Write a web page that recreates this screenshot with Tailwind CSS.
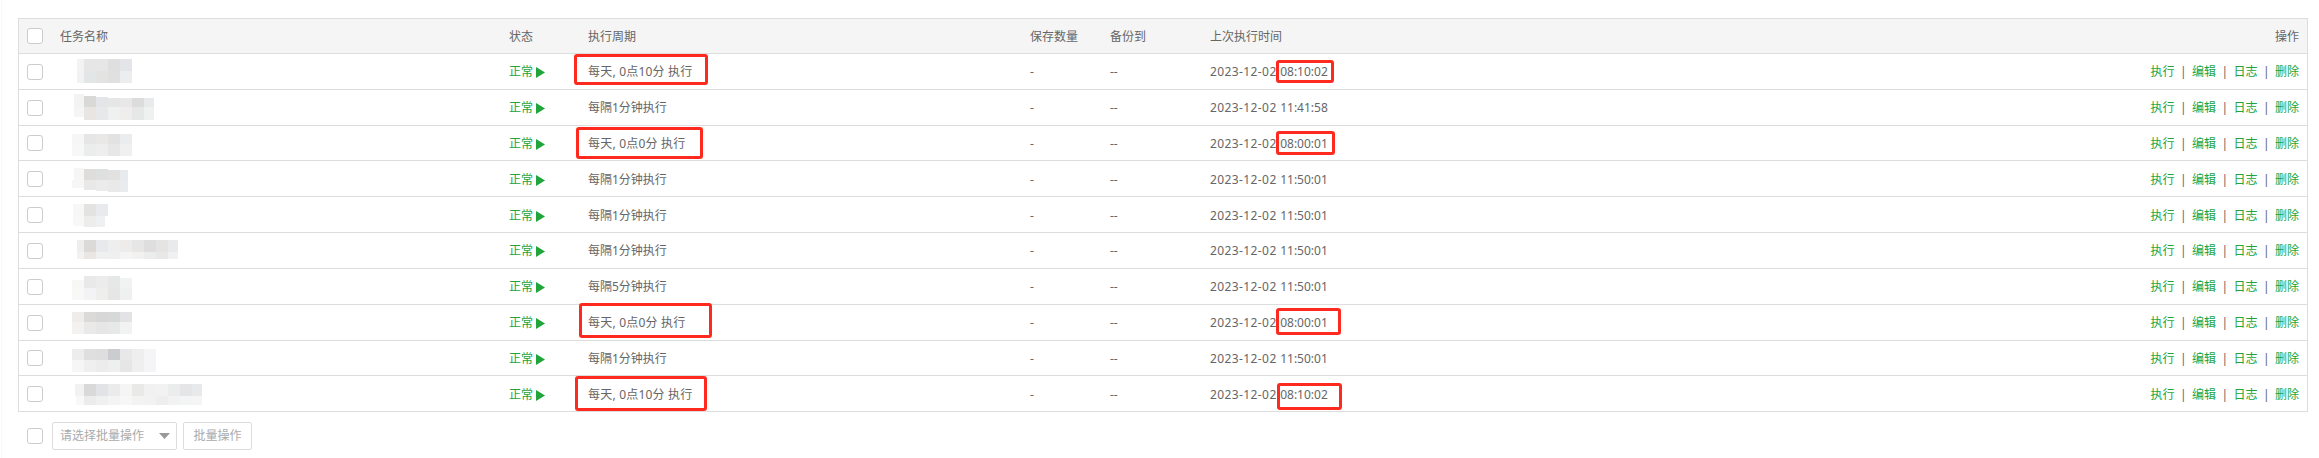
<!DOCTYPE html>
<html lang="zh-CN">
<head>
  <meta charset="UTF-8" />
  <title>计划任务</title>
  <script src="https://cdn.jsdelivr.net/npm/@tailwindcss/browser@4"></script>
</head>
<body class="bg-white">
<div class="relative w-[2319px] h-[458px] overflow-hidden pt-[18px] text-[12px] leading-[16px] text-[#666] font-['Noto_Sans','Noto_Sans_CJK_SC',sans-serif]">
  <div class="absolute left-[1px] top-0 w-px h-full bg-[#f9f9f9]"></div>

  <!-- Task table -->
  <div class="ml-[18px] w-[2290px] border-t border-x border-[#ddd]">
    <div class="grid grid-cols-[41px_449px_79px_442px_80px_100px_1fr_200px] items-center h-[35px] bg-[#f5f5f5] border-b border-[#ddd]">
      <div class="pl-2 flex"><input type="checkbox" class="appearance-none w-4 h-4 bg-white border border-[#ccc] rounded-[3px]" /></div>
      <div class="pt-[2px]">任务名称</div>
      <div class="pt-[2px]">状态</div>
      <div class="pt-[2px]">执行周期</div>
      <div class="pt-[2px]">保存数量</div>
      <div class="pt-[2px]">备份到</div>
      <div class="pt-[2px]">上次执行时间</div>
      <div class="pt-[2px] pr-2 text-right">操作</div>
    </div>

    <!-- row 1 -->
    <div class="grid grid-cols-[41px_449px_79px_442px_80px_100px_1fr_200px] items-center h-9 border-b border-[#ddd]">
      <div class="pl-2 flex"><input type="checkbox" class="appearance-none w-4 h-4 bg-white border border-[#ccc] rounded-[3px]" /></div>
      <div><svg class="block w-[160px] h-[35px]" viewBox="60 54 160 35"><rect x="77" y="59" width="7" height="12" fill="#f3f3f3"/><rect x="84" y="59" width="12" height="12" fill="#e6e6e6"/><rect x="96" y="59" width="12" height="12" fill="#e6e6e6"/><rect x="108" y="59" width="12" height="12" fill="#dfdfdf"/><rect x="120" y="59" width="12" height="12" fill="#e4e5e8"/><rect x="77" y="71" width="7" height="12" fill="#f2f2f2"/><rect x="84" y="71" width="12" height="12" fill="#e3e6e6"/><rect x="96" y="71" width="12" height="12" fill="#e3e3e1"/><rect x="108" y="71" width="12" height="12" fill="#e0e0e0"/><rect x="120" y="71" width="12" height="12" fill="#ecedef"/></svg></div>
      <div class="pt-[1px] flex items-center text-[#20a53a]">正常<svg class="ml-[3px] w-[9px] h-[11px]" viewBox="0 0 9 11"><polygon points="0,0 9,5.5 0,11" fill="#20a53a"/></svg></div>
      <div class="pt-[1px] tracking-[0.2px]">每天, 0点10分 执行</div>
      <div class="pt-[1px]">-</div>
      <div class="pt-[1px]">--</div>
      <div class="pt-[1px]"><span class="tracking-[0.4px]">2023-12-02 </span>08:10:02</div>
      <div class="pt-[1px] pr-2 flex justify-end text-[#20a53a]"><span>执行</span><span class="w-[17.5px] text-center text-[#666]">|</span><span>编辑</span><span class="w-[17.5px] text-center text-[#666]">|</span><span>日志</span><span class="w-[17.5px] text-center text-[#666]">|</span><span>删除</span></div>
    </div>

    <!-- row 2 -->
    <div class="grid grid-cols-[41px_449px_79px_442px_80px_100px_1fr_200px] items-center h-9 border-b border-[#ddd]">
      <div class="pl-2 flex"><input type="checkbox" class="appearance-none w-4 h-4 bg-white border border-[#ccc] rounded-[3px]" /></div>
      <div><svg class="block w-[160px] h-[35px]" viewBox="60 90 160 35"><rect x="74" y="94" width="10" height="13" fill="#f3f3f3"/><rect x="84" y="96" width="12" height="11" fill="#d9d9d7"/><rect x="96" y="97" width="12" height="10" fill="#e4e5e8"/><rect x="108" y="98" width="12" height="9" fill="#e6e6e7"/><rect x="120" y="98" width="12" height="9" fill="#e8e8e8"/><rect x="132" y="98" width="12" height="9" fill="#dcdcdc"/><rect x="144" y="98" width="10" height="9" fill="#e9eaec"/><rect x="74" y="107" width="10" height="10" fill="#f5f5f5"/><rect x="84" y="107" width="12" height="13" fill="#e8e5e3"/><rect x="96" y="107" width="12" height="13" fill="#e7e8ea"/><rect x="108" y="107" width="12" height="13" fill="#eff1f0"/><rect x="120" y="107" width="12" height="13" fill="#f0eeed"/><rect x="132" y="107" width="12" height="13" fill="#e6e8e7"/><rect x="144" y="107" width="10" height="13" fill="#eff0f0"/></svg></div>
      <div class="pt-[1px] flex items-center text-[#20a53a]">正常<svg class="ml-[3px] w-[9px] h-[11px]" viewBox="0 0 9 11"><polygon points="0,0 9,5.5 0,11" fill="#20a53a"/></svg></div>
      <div class="pt-[1px]">每隔1分钟执行</div>
      <div class="pt-[1px]">-</div>
      <div class="pt-[1px]">--</div>
      <div class="pt-[1px]"><span class="tracking-[0.4px]">2023-12-02 </span>11:41:58</div>
      <div class="pt-[1px] pr-2 flex justify-end text-[#20a53a]"><span>执行</span><span class="w-[17.5px] text-center text-[#666]">|</span><span>编辑</span><span class="w-[17.5px] text-center text-[#666]">|</span><span>日志</span><span class="w-[17.5px] text-center text-[#666]">|</span><span>删除</span></div>
    </div>

    <!-- row 3 -->
    <div class="grid grid-cols-[41px_449px_79px_442px_80px_100px_1fr_200px] items-center h-[35px] border-b border-[#ddd]">
      <div class="pl-2 flex"><input type="checkbox" class="appearance-none w-4 h-4 bg-white border border-[#ccc] rounded-[3px]" /></div>
      <div><svg class="block w-[160px] h-[34px]" viewBox="60 126 160 34"><rect x="72" y="134" width="12" height="10" fill="#f6f6f6"/><rect x="84" y="134" width="12" height="10" fill="#e6e6e6"/><rect x="96" y="134" width="12" height="10" fill="#e9e8e6"/><rect x="108" y="134" width="12" height="10" fill="#e2e2e3"/><rect x="120" y="134" width="12" height="10" fill="#ebecee"/><rect x="72" y="144" width="12" height="12" fill="#f7f7f7"/><rect x="84" y="144" width="12" height="12" fill="#ebeded"/><rect x="96" y="144" width="12" height="12" fill="#eeeeee"/><rect x="108" y="144" width="12" height="12" fill="#e7e7e8"/><rect x="120" y="144" width="12" height="12" fill="#f0f0f0"/></svg></div>
      <div class="pt-[2px] flex items-center text-[#20a53a]">正常<svg class="ml-[3px] w-[9px] h-[11px]" viewBox="0 0 9 11"><polygon points="0,0 9,5.5 0,11" fill="#20a53a"/></svg></div>
      <div class="pt-[2px] tracking-[0.2px]">每天, 0点0分 执行</div>
      <div class="pt-[2px]">-</div>
      <div class="pt-[2px]">--</div>
      <div class="pt-[2px]"><span class="tracking-[0.4px]">2023-12-02 </span>08:00:01</div>
      <div class="pt-[2px] pr-2 flex justify-end text-[#20a53a]"><span>执行</span><span class="w-[17.5px] text-center text-[#666]">|</span><span>编辑</span><span class="w-[17.5px] text-center text-[#666]">|</span><span>日志</span><span class="w-[17.5px] text-center text-[#666]">|</span><span>删除</span></div>
    </div>

    <!-- row 4 -->
    <div class="grid grid-cols-[41px_449px_79px_442px_80px_100px_1fr_200px] items-center h-9 border-b border-[#ddd]">
      <div class="pl-2 flex"><input type="checkbox" class="appearance-none w-4 h-4 bg-white border border-[#ccc] rounded-[3px]" /></div>
      <div><svg class="block w-[160px] h-[35px]" viewBox="60 161 160 35"><rect x="74" y="168" width="10" height="12" fill="#f6f6f6"/><rect x="84" y="169" width="12" height="11" fill="#dedddb"/><rect x="96" y="169" width="12" height="11" fill="#dde0de"/><rect x="108" y="170" width="12" height="10" fill="#e3e1df"/><rect x="120" y="170" width="8" height="10" fill="#e8ebee"/><rect x="72" y="180" width="12" height="8" fill="#f6f6f6"/><rect x="84" y="180" width="12" height="10" fill="#e8e8e8"/><rect x="96" y="180" width="12" height="11" fill="#ebebeb"/><rect x="108" y="180" width="12" height="12" fill="#e9e9e9"/><rect x="120" y="180" width="8" height="12" fill="#e9ebee"/></svg></div>
      <div class="pt-[3px] flex items-center text-[#20a53a]">正常<svg class="ml-[3px] w-[9px] h-[11px]" viewBox="0 0 9 11"><polygon points="0,0 9,5.5 0,11" fill="#20a53a"/></svg></div>
      <div class="pt-[3px]">每隔1分钟执行</div>
      <div class="pt-[3px]">-</div>
      <div class="pt-[3px]">--</div>
      <div class="pt-[3px]"><span class="tracking-[0.4px]">2023-12-02 </span>11:50:01</div>
      <div class="pt-[3px] pr-2 flex justify-end text-[#20a53a]"><span>执行</span><span class="w-[17.5px] text-center text-[#666]">|</span><span>编辑</span><span class="w-[17.5px] text-center text-[#666]">|</span><span>日志</span><span class="w-[17.5px] text-center text-[#666]">|</span><span>删除</span></div>
    </div>

    <!-- row 5 -->
    <div class="grid grid-cols-[41px_449px_79px_442px_80px_100px_1fr_200px] items-center h-9 border-b border-[#ddd]">
      <div class="pl-2 flex"><input type="checkbox" class="appearance-none w-4 h-4 bg-white border border-[#ccc] rounded-[3px]" /></div>
      <div><svg class="block w-[160px] h-[35px]" viewBox="60 197 160 35"><rect x="73" y="204" width="11" height="12" fill="#f7f7f7"/><rect x="84" y="204" width="12" height="12" fill="#e3e3e2"/><rect x="96" y="204" width="12" height="12" fill="#e9eaed"/><rect x="73" y="216" width="11" height="10" fill="#f8f8f8"/><rect x="84" y="216" width="12" height="11" fill="#ededeb"/><rect x="96" y="216" width="9" height="11" fill="#eff0f2"/></svg></div>
      <div class="pt-[3px] flex items-center text-[#20a53a]">正常<svg class="ml-[3px] w-[9px] h-[11px]" viewBox="0 0 9 11"><polygon points="0,0 9,5.5 0,11" fill="#20a53a"/></svg></div>
      <div class="pt-[3px]">每隔1分钟执行</div>
      <div class="pt-[3px]">-</div>
      <div class="pt-[3px]">--</div>
      <div class="pt-[3px]"><span class="tracking-[0.4px]">2023-12-02 </span>11:50:01</div>
      <div class="pt-[3px] pr-2 flex justify-end text-[#20a53a]"><span>执行</span><span class="w-[17.5px] text-center text-[#666]">|</span><span>编辑</span><span class="w-[17.5px] text-center text-[#666]">|</span><span>日志</span><span class="w-[17.5px] text-center text-[#666]">|</span><span>删除</span></div>
    </div>

    <!-- row 6 -->
    <div class="grid grid-cols-[41px_449px_79px_442px_80px_100px_1fr_200px] items-center h-9 border-b border-[#ddd]">
      <div class="pl-2 flex"><input type="checkbox" class="appearance-none w-4 h-4 bg-white border border-[#ccc] rounded-[3px]" /></div>
      <div><svg class="block w-[160px] h-[35px]" viewBox="60 233 160 35"><rect x="77" y="240" width="7" height="12" fill="#eeeeee"/><rect x="84" y="240" width="12" height="12" fill="#dcdad8"/><rect x="96" y="240" width="12" height="12" fill="#e7e9ec"/><rect x="108" y="240" width="12" height="12" fill="#eeeeee"/><rect x="120" y="240" width="12" height="12" fill="#eeecea"/><rect x="132" y="240" width="12" height="12" fill="#e6e6e6"/><rect x="144" y="240" width="12" height="12" fill="#dededf"/><rect x="156" y="240" width="12" height="12" fill="#e5e4e2"/><rect x="168" y="240" width="10" height="12" fill="#e9eaec"/><rect x="77" y="252" width="7" height="7" fill="#f2f2f2"/><rect x="84" y="252" width="12" height="7" fill="#e9e6e4"/><rect x="96" y="252" width="12" height="7" fill="#f0f0f0"/><rect x="108" y="252" width="12" height="7" fill="#efefef"/><rect x="120" y="252" width="12" height="7" fill="#f3f4f3"/><rect x="132" y="252" width="12" height="7" fill="#f3f1ef"/><rect x="144" y="252" width="12" height="7" fill="#ebeded"/><rect x="156" y="252" width="12" height="7" fill="#e8e8e6"/><rect x="168" y="252" width="10" height="7" fill="#f1f1f1"/></svg></div>
      <div class="pt-[1px] flex items-center text-[#20a53a]">正常<svg class="ml-[3px] w-[9px] h-[11px]" viewBox="0 0 9 11"><polygon points="0,0 9,5.5 0,11" fill="#20a53a"/></svg></div>
      <div class="pt-[1px]">每隔1分钟执行</div>
      <div class="pt-[1px]">-</div>
      <div class="pt-[1px]">--</div>
      <div class="pt-[1px]"><span class="tracking-[0.4px]">2023-12-02 </span>11:50:01</div>
      <div class="pt-[1px] pr-2 flex justify-end text-[#20a53a]"><span>执行</span><span class="w-[17.5px] text-center text-[#666]">|</span><span>编辑</span><span class="w-[17.5px] text-center text-[#666]">|</span><span>日志</span><span class="w-[17.5px] text-center text-[#666]">|</span><span>删除</span></div>
    </div>

    <!-- row 7 -->
    <div class="grid grid-cols-[41px_449px_79px_442px_80px_100px_1fr_200px] items-center h-9 border-b border-[#ddd]">
      <div class="pl-2 flex"><input type="checkbox" class="appearance-none w-4 h-4 bg-white border border-[#ccc] rounded-[3px]" /></div>
      <div><svg class="block w-[160px] h-[35px]" viewBox="60 269 160 35"><rect x="72" y="280" width="12" height="8" fill="#f7f7f5"/><rect x="84" y="276" width="12" height="12" fill="#e9e9e9"/><rect x="96" y="276" width="12" height="12" fill="#ececec"/><rect x="108" y="276" width="12" height="12" fill="#e6e7e7"/><rect x="120" y="278" width="12" height="10" fill="#f1f3f3"/><rect x="72" y="288" width="12" height="12" fill="#f8f8f6"/><rect x="84" y="288" width="12" height="12" fill="#f3f3f5"/><rect x="96" y="288" width="12" height="12" fill="#eeeeec"/><rect x="108" y="288" width="12" height="12" fill="#e6e6e6"/><rect x="120" y="288" width="12" height="12" fill="#eff1f1"/></svg></div>
      <div class="pt-[1px] flex items-center text-[#20a53a]">正常<svg class="ml-[3px] w-[9px] h-[11px]" viewBox="0 0 9 11"><polygon points="0,0 9,5.5 0,11" fill="#20a53a"/></svg></div>
      <div class="pt-[1px]">每隔5分钟执行</div>
      <div class="pt-[1px]">-</div>
      <div class="pt-[1px]">--</div>
      <div class="pt-[1px]"><span class="tracking-[0.4px]">2023-12-02 </span>11:50:01</div>
      <div class="pt-[1px] pr-2 flex justify-end text-[#20a53a]"><span>执行</span><span class="w-[17.5px] text-center text-[#666]">|</span><span>编辑</span><span class="w-[17.5px] text-center text-[#666]">|</span><span>日志</span><span class="w-[17.5px] text-center text-[#666]">|</span><span>删除</span></div>
    </div>

    <!-- row 8 -->
    <div class="grid grid-cols-[41px_449px_79px_442px_80px_100px_1fr_200px] items-center h-9 border-b border-[#ddd]">
      <div class="pl-2 flex"><input type="checkbox" class="appearance-none w-4 h-4 bg-white border border-[#ccc] rounded-[3px]" /></div>
      <div><svg class="block w-[160px] h-[35px]" viewBox="60 305 160 35"><rect x="72" y="312" width="12" height="10" fill="#efedeb"/><rect x="84" y="312" width="12" height="10" fill="#dbdad9"/><rect x="96" y="312" width="12" height="10" fill="#d7d7d7"/><rect x="108" y="312" width="12" height="10" fill="#d7d8d8"/><rect x="120" y="312" width="12" height="10" fill="#e3e3e5"/><rect x="72" y="322" width="12" height="12" fill="#f3f2f0"/><rect x="84" y="322" width="12" height="12" fill="#e9e9e9"/><rect x="96" y="322" width="12" height="12" fill="#e6e6e6"/><rect x="108" y="322" width="12" height="12" fill="#e7e8e8"/><rect x="120" y="322" width="12" height="12" fill="#f2f2f2"/></svg></div>
      <div class="pt-[1px] flex items-center text-[#20a53a]">正常<svg class="ml-[3px] w-[9px] h-[11px]" viewBox="0 0 9 11"><polygon points="0,0 9,5.5 0,11" fill="#20a53a"/></svg></div>
      <div class="pt-[1px] tracking-[0.2px]">每天, 0点0分 执行</div>
      <div class="pt-[1px]">-</div>
      <div class="pt-[1px]">--</div>
      <div class="pt-[1px]"><span class="tracking-[0.4px]">2023-12-02 </span>08:00:01</div>
      <div class="pt-[1px] pr-2 flex justify-end text-[#20a53a]"><span>执行</span><span class="w-[17.5px] text-center text-[#666]">|</span><span>编辑</span><span class="w-[17.5px] text-center text-[#666]">|</span><span>日志</span><span class="w-[17.5px] text-center text-[#666]">|</span><span>删除</span></div>
    </div>

    <!-- row 9 -->
    <div class="grid grid-cols-[41px_449px_79px_442px_80px_100px_1fr_200px] items-center h-[35px] border-b border-[#ddd]">
      <div class="pl-2 flex"><input type="checkbox" class="appearance-none w-4 h-4 bg-white border border-[#ccc] rounded-[3px]" /></div>
      <div><svg class="block w-[160px] h-[34px]" viewBox="60 341 160 34"><rect x="72" y="349" width="12" height="11" fill="#ededee"/><rect x="84" y="349" width="12" height="11" fill="#dfdfdf"/><rect x="96" y="349" width="12" height="11" fill="#dedede"/><rect x="108" y="349" width="12" height="11" fill="#cbcccf"/><rect x="120" y="349" width="12" height="11" fill="#e8e8e8"/><rect x="132" y="349" width="12" height="11" fill="#eeeeee"/><rect x="144" y="349" width="12" height="11" fill="#f5f5f7"/><rect x="72" y="360" width="12" height="12" fill="#f6f6f6"/><rect x="84" y="360" width="12" height="12" fill="#efefef"/><rect x="96" y="360" width="12" height="12" fill="#ececec"/><rect x="108" y="360" width="12" height="12" fill="#eef0ef"/><rect x="120" y="360" width="12" height="12" fill="#e6e6e6"/><rect x="132" y="360" width="12" height="12" fill="#efefef"/><rect x="144" y="360" width="12" height="12" fill="#f5f5f7"/></svg></div>
      <div class="pt-[2px] flex items-center text-[#20a53a]">正常<svg class="ml-[3px] w-[9px] h-[11px]" viewBox="0 0 9 11"><polygon points="0,0 9,5.5 0,11" fill="#20a53a"/></svg></div>
      <div class="pt-[2px]">每隔1分钟执行</div>
      <div class="pt-[2px]">-</div>
      <div class="pt-[2px]">--</div>
      <div class="pt-[2px]"><span class="tracking-[0.4px]">2023-12-02 </span>11:50:01</div>
      <div class="pt-[2px] pr-2 flex justify-end text-[#20a53a]"><span>执行</span><span class="w-[17.5px] text-center text-[#666]">|</span><span>编辑</span><span class="w-[17.5px] text-center text-[#666]">|</span><span>日志</span><span class="w-[17.5px] text-center text-[#666]">|</span><span>删除</span></div>
    </div>

    <!-- row 10 -->
    <div class="grid grid-cols-[41px_449px_79px_442px_80px_100px_1fr_200px] items-center h-9 border-b border-[#ddd]">
      <div class="pl-2 flex"><input type="checkbox" class="appearance-none w-4 h-4 bg-white border border-[#ccc] rounded-[3px]" /></div>
      <div><svg class="block w-[160px] h-[35px]" viewBox="60 376 160 35"><rect x="75" y="384" width="9" height="12" fill="#f2f2f0"/><rect x="84" y="384" width="12" height="12" fill="#d9d9d9"/><rect x="96" y="384" width="12" height="12" fill="#e1e3e6"/><rect x="108" y="384" width="12" height="12" fill="#ebebeb"/><rect x="120" y="384" width="12" height="12" fill="#f5f5f5"/><rect x="132" y="384" width="12" height="12" fill="#e9e9e7"/><rect x="144" y="384" width="12" height="12" fill="#f1f1f1"/><rect x="156" y="384" width="12" height="12" fill="#f2f2f2"/><rect x="168" y="384" width="12" height="12" fill="#ebeded"/><rect x="180" y="384" width="12" height="12" fill="#e5e5e7"/><rect x="192" y="384" width="10" height="12" fill="#e8e9eb"/><rect x="76" y="396" width="8" height="9" fill="#f8f8f8"/><rect x="84" y="396" width="12" height="9" fill="#ececec"/><rect x="96" y="396" width="12" height="9" fill="#f0f0f0"/><rect x="108" y="396" width="12" height="9" fill="#f4f4f4"/><rect x="120" y="396" width="12" height="9" fill="#f7f7f7"/><rect x="132" y="396" width="12" height="9" fill="#f3f3f3"/><rect x="144" y="396" width="12" height="9" fill="#f2f2f2"/><rect x="156" y="396" width="12" height="9" fill="#eeeeec"/><rect x="168" y="396" width="12" height="9" fill="#f2f2f2"/><rect x="180" y="396" width="12" height="9" fill="#f3f5f5"/><rect x="192" y="396" width="10" height="9" fill="#f5f5f5"/></svg></div>
      <div class="pt-[3px] flex items-center text-[#20a53a]">正常<svg class="ml-[3px] w-[9px] h-[11px]" viewBox="0 0 9 11"><polygon points="0,0 9,5.5 0,11" fill="#20a53a"/></svg></div>
      <div class="pt-[3px] tracking-[0.2px]">每天, 0点10分 执行</div>
      <div class="pt-[3px]">-</div>
      <div class="pt-[3px]">--</div>
      <div class="pt-[3px]"><span class="tracking-[0.4px]">2023-12-02 </span>08:10:02</div>
      <div class="pt-[3px] pr-2 flex justify-end text-[#20a53a]"><span>执行</span><span class="w-[17.5px] text-center text-[#666]">|</span><span>编辑</span><span class="w-[17.5px] text-center text-[#666]">|</span><span>日志</span><span class="w-[17.5px] text-center text-[#666]">|</span><span>删除</span></div>
    </div>
  </div>

  <!-- Batch action bar -->
  <div class="ml-[27px] mt-[10px] flex items-center text-[#aaa]">
    <input type="checkbox" class="appearance-none w-4 h-4 bg-white border border-[#ccc] rounded-[3px]" />
    <div class="ml-[9px] w-[125px] h-[28px] pl-[7px] pr-[6px] flex items-center justify-between border border-[#ddd] rounded-[2px]">
      <span>请选择批量操作</span>
      <svg class="w-[11px] h-[6px]" viewBox="0 0 11 6"><polygon points="0,0 11,0 5.5,6" fill="#999"/></svg>
    </div>
    <div class="ml-[6px] w-[69px] h-[28px] flex items-center justify-center border border-[#ddd] rounded-[2px]">批量操作</div>
  </div>

  <!-- Red annotations drawn over the screenshot -->
  <div class="absolute left-[574px] top-[54px] w-[134px] h-[31px] border-[3px] border-[#ff2a1f] rounded-[3px]"></div>
  <div class="absolute left-[576px] top-[127px] w-[127px] h-[32px] border-[3px] border-[#ff2a1f] rounded-[3px]"></div>
  <div class="absolute left-[579px] top-[303px] w-[133px] h-[35px] border-[3px] border-[#ff2a1f] rounded-[3px]"></div>
  <div class="absolute left-[575px] top-[376px] w-[132px] h-[35px] border-[3px] border-[#ff2a1f] rounded-[3px]"></div>
  <div class="absolute left-[1276px] top-[60px] w-[58px] h-[23px] border-[3px] border-[#ff2a1f] rounded-[3px]"></div>
  <div class="absolute left-[1276px] top-[131px] w-[59px] h-[24px] border-[3px] border-[#ff2a1f] rounded-[3px]"></div>
  <div class="absolute left-[1276px] top-[308px] w-[65px] h-[27px] border-[3px] border-[#ff2a1f] rounded-[3px]"></div>
  <div class="absolute left-[1277px] top-[383px] w-[65px] h-[27px] border-[3px] border-[#ff2a1f] rounded-[3px]"></div>
</div>
</body>
</html>
